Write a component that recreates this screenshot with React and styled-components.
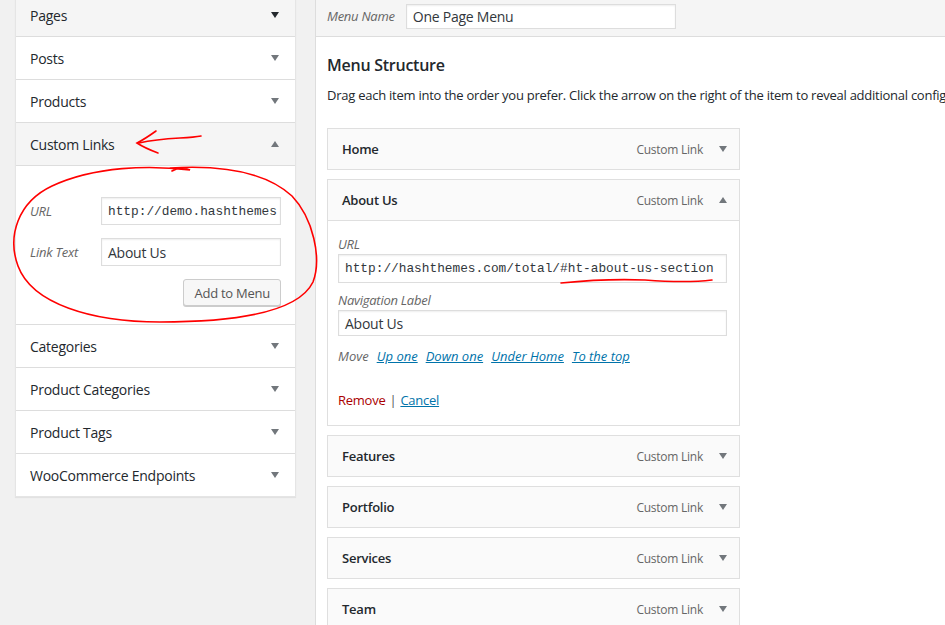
import React from 'react';
import styled, { createGlobalStyle } from 'styled-components';

const GlobalStyle = createGlobalStyle`
  body {
    margin: 0;
    background: #f1f1f1;
    font-family: "Open Sans", "Noto Sans", sans-serif;
    letter-spacing: -0.25px;
    color: #23282d;
    overflow: hidden;
  }
`;

const Page = styled.div`
  position: relative;
  display: flex;
  gap: 19px;
  padding-left: 15px;
  height: 625px;
  overflow: hidden;
`;

const LeftCol = styled.div`
  width: 279px;
  flex: none;
  align-self: flex-start;
  margin-top: -7px;
  background: #fff;
  border: 1px solid #e5e5e5;
  box-shadow: 0 1px 1px rgba(0, 0, 0, 0.06);
`;

const SectionTitle = styled.div`
  height: 42px;
  display: flex;
  align-items: center;
  justify-content: space-between;
  padding: 0 16px 0 14px;
  font-size: 14px;
  background: ${({ grey }) => (grey ? '#f5f5f5' : '#fff')};
  border-bottom: 1px solid #ddd;
  &:last-child { border-bottom: none; }
`;

const Arrow = styled.span`
  width: 0;
  height: 0;
  border-left: 4.5px solid transparent;
  border-right: 4.5px solid transparent;
  ${({ up, dark }) =>
    up
      ? `border-bottom: 6px solid ${dark ? '#23282d' : '#72777c'};`
      : `border-top: 6px solid ${dark ? '#23282d' : '#72777c'};`}
`;

const SectionBody = styled.div`
  padding: 31px 14px 18px 14px;
  border-bottom: 1px solid #ddd;
  display: flex;
  flex-direction: column;
  gap: 13px;
`;

const FieldRow = styled.div`
  display: flex;
  align-items: center;
  justify-content: space-between;
`;

const Label = styled.span`
  font-size: 13px;
  font-style: italic;
  color: #666;
`;

const Input = styled.div`
  box-sizing: border-box;
  width: ${({ w }) => w || '100%'};
  height: ${({ h }) => h || 28}px;
  border: 1px solid #ddd;
  box-shadow: inset 0 1px 2px rgba(0, 0, 0, 0.07);
  background: #fff;
  display: flex;
  align-items: center;
  padding: 0 6px;
  overflow: hidden;
  white-space: nowrap;
  font-size: 14px;
  color: #32373c;
  ${({ mono }) =>
    mono &&
    `font-family: "Liberation Mono", "DejaVu Sans Mono", monospace;
     font-size: 12.8px;
     letter-spacing: 0;`}
`;

const ButtonRow = styled.div`
  display: flex;
  justify-content: flex-end;
`;

const Button = styled.div`
  height: 27px;
  box-sizing: border-box;
  padding: 0 10px;
  display: flex;
  align-items: center;
  font-size: 13px;
  color: #555;
  background: #f7f7f7;
  border: 1px solid #ccc;
  border-radius: 3px;
  box-shadow: 0 1px 0 #ccc;
`;

const RightCol = styled.div`
  flex: 1;
  background: #fff;
  border-left: 1px solid #ddd;
`;

const NameBar = styled.div`
  height: 32px;
  padding: 0 11px 4px;
  background: #f5f5f5;
  border-bottom: 1px solid #ddd;
  display: flex;
  align-items: center;
  gap: 11px;
`;

const Body = styled.div`
  padding: 0 11px;
`;

const Heading = styled.h3`
  margin: 17px 0 0;
  font-size: 16px;
  font-weight: 600;
  line-height: 22px;
`;

const Desc = styled.p`
  margin: 10px 0 0;
  font-size: 13px;
  line-height: 18px;
  white-space: nowrap;
`;

const Items = styled.div`
  width: 413px;
  margin-top: 24px;
  display: flex;
  flex-direction: column;
  gap: 9px;
`;

const Item = styled.div`
  border: 1px solid #dfdfdf;
  background: #fff;
`;

const ItemBar = styled.div`
  height: 40px;
  background: #fafafa;
  display: flex;
  align-items: center;
  padding: 0 12px 0 14px;
  font-size: 13px;
  font-weight: 600;
`;

const ItemTitle = styled.span`
  flex: 1;
`;

const ItemType = styled.span`
  font-size: 12px;
  font-weight: 400;
  color: #666;
  margin-right: 16px;
`;

const ItemBody = styled.div`
  border-top: 1px solid #dfdfdf;
  padding: 14px 12px 16px 10px;
`;

const ItemLabel = styled.div`
  font-size: 13px;
  font-style: italic;
  color: #666;
  line-height: 18px;
  margin-top: ${({ mt }) => mt || 0}px;
  margin-bottom: 1px;
`;

const MoveRow = styled.div`
  margin-top: 11px;
  font-size: 13px;
  line-height: 18px;
  font-style: italic;
  letter-spacing: 0;
  color: #666;
  display: flex;
  gap: 8px;
`;

const Link = styled.a`
  color: #0073aa;
  text-decoration: underline;
  font-style: ${({ italic }) => (italic ? 'italic' : 'normal')};
  cursor: pointer;
`;

const Actions = styled.div`
  margin-top: 26px;
  font-size: 13px;
  line-height: 18px;
  display: flex;
  gap: 4px;
  color: #555;
`;

const Remove = styled.span`
  color: #a00;
`;

const Overlay = styled.svg`
  position: absolute;
  left: 0;
  top: 0;
  pointer-events: none;
`;

const sections = [
  { t: 'Pages', grey: true, dark: true },
  { t: 'Posts' },
  { t: 'Products' },
];
const after = ['Categories', 'Product Categories', 'Product Tags', 'WooCommerce Endpoints'];
const menuItems = ['Features', 'Portfolio', 'Services', 'Team'];

function MenuItem({ title, up, children }) {
  return (
    <Item>
      <ItemBar>
        <ItemTitle>{title}</ItemTitle>
        <ItemType>Custom Link</ItemType>
        <Arrow up={up} />
      </ItemBar>
      {children}
    </Item>
  );
}

export default function App() {
  return (
    <>
      <GlobalStyle />
      <Page>
        <LeftCol>
          {sections.map((s) => (
            <SectionTitle key={s.t} grey={s.grey}>
              {s.t}
              <Arrow dark={s.dark} />
            </SectionTitle>
          ))}
          <SectionTitle grey>
            Custom Links
            <Arrow up />
          </SectionTitle>
          <SectionBody>
            <FieldRow>
              <Label>URL</Label>
              <Input w="180px" mono>http://demo.hashthemes</Input>
            </FieldRow>
            <FieldRow>
              <Label>Link Text</Label>
              <Input w="180px">About Us</Input>
            </FieldRow>
            <ButtonRow>
              <Button>Add to Menu</Button>
            </ButtonRow>
          </SectionBody>
          {after.map((t) => (
            <SectionTitle key={t}>
              {t}
              <Arrow />
            </SectionTitle>
          ))}
        </LeftCol>

        <RightCol>
          <NameBar>
            <Label>Menu Name</Label>
            <Input w="270px" h={25}>One Page Menu</Input>
          </NameBar>
          <Body>
            <Heading>Menu Structure</Heading>
            <Desc>
              Drag each item into the order you prefer. Click the arrow on the right of the item to reveal additional configuration options.
            </Desc>
            <Items>
              <MenuItem title="Home" />
              <MenuItem title="About Us" up>
                <ItemBody>
                  <ItemLabel>URL</ItemLabel>
                  <Input h={29} mono>http://hashthemes.com/total/#ht-about-us-section</Input>
                  <ItemLabel mt={8}>Navigation Label</ItemLabel>
                  <Input h={26}>About Us</Input>
                  <MoveRow>
                    Move
                    <Link italic>Up one</Link>
                    <Link italic>Down one</Link>
                    <Link italic>Under Home</Link>
                    <Link italic>To the top</Link>
                  </MoveRow>
                  <Actions>
                    <Remove>Remove</Remove> | <Link>Cancel</Link>
                  </Actions>
                </ItemBody>
              </MenuItem>
              {menuItems.map((t) => (
                <MenuItem key={t} title={t} />
              ))}
            </Items>
          </Body>
        </RightCol>

        <Overlay width="945" height="625" viewBox="0 0 945 625" fill="none" stroke="#f00" strokeWidth="1.6" strokeLinecap="round">
          <path d="M201 136 C186 139 166 137 139 143" />
          <path d="M156 131 C149 136 143 140 137 143 C143 147 150 150 158 153" />
          <path d="M172 171 C178 167 186 168 190 170 C150 165 95 166 52 186 C18 202 7 236 18 266 C32 304 92 322 160 322 C232 322 298 313 313 282 C322 258 313 218 292 196 C266 172 220 165 170 168" />
          <path d="M561 283 C590 280 620 279 645 280 C672 282 695 282 712 280" />
        </Overlay>
      </Page>
    </>
  );
}
